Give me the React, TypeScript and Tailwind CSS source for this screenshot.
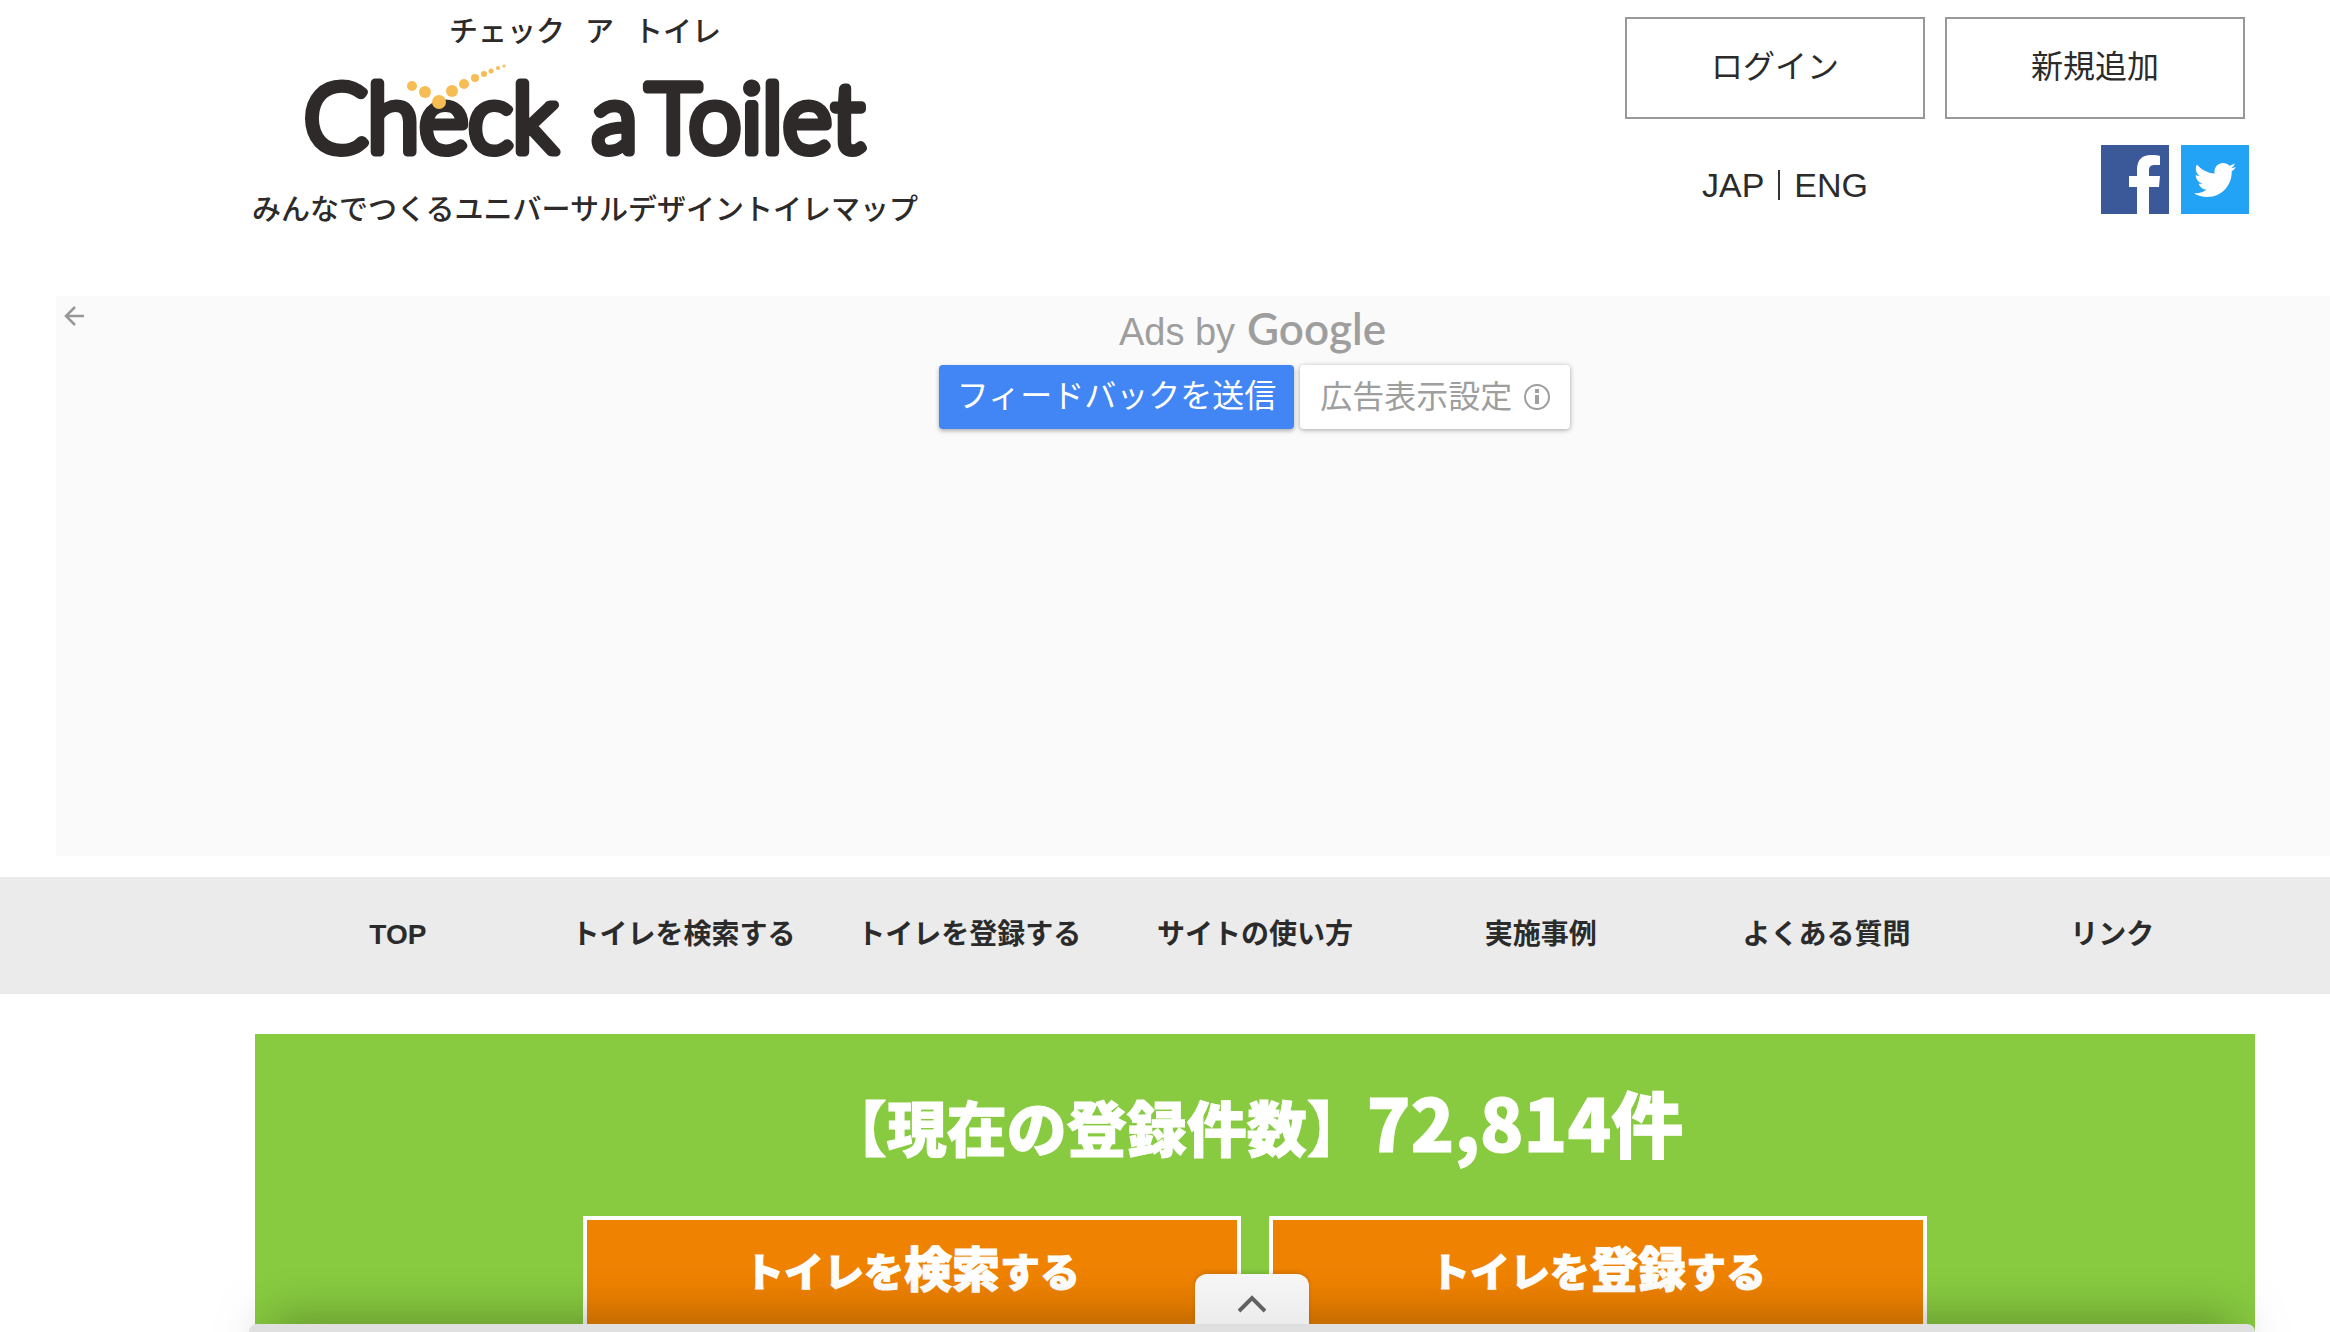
import { FaTwitter } from "react-icons/fa";

const NAV_ITEMS = [
  "TOP",
  "トイレを検索する",
  "トイレを登録する",
  "サイトの使い方",
  "実施事例",
  "よくある質問",
  "リンク",
];

const CHECK_DOTS = [
  [117, 37, 5],
  [130, 43, 6],
  [144, 53, 7],
  [157, 42, 6],
  [169, 35, 5],
  [180, 29, 4],
  [189, 25, 3],
  [196, 22, 2.5],
  [203, 19, 2],
  [209, 17, 1.5],
];

function Logo() {
  return (
    <a href="#" className="flex w-[668px] flex-col items-center text-[29px] leading-10 font-medium text-[#2d2a29]">
      <span className="flex gap-5">
        <span>チェック</span>
        <span>ア</span>
        <span>トイレ</span>
      </span>
      <svg viewBox="0 0 580 138" className="h-[138px] w-[580px]" role="img" aria-label="Check a Toilet">
        <g
          fill="#2d2a29"
          stroke="#2d2a29"
          strokeWidth="9"
          strokeLinejoin="round"
          fontFamily="Lato, sans-serif"
          fontWeight="300"
          fontSize="94"
        >
          <text x="9" y="103">Check</text>
          <text x="297" y="103">a</text>
          <text x="351" y="103">Toilet</text>
        </g>
        <g fill="#f6bd55">
          {CHECK_DOTS.map(([x, y, r]) => (
            <circle key={x} cx={x} cy={y} r={r} />
          ))}
        </g>
      </svg>
      <span className="whitespace-nowrap">みんなでつくるユニバーサルデザイントイレマップ</span>
    </a>
  );
}

function FacebookMark() {
  return (
    <svg viewBox="0 0 68 69" className="h-[69px] w-[68px]" aria-hidden="true">
      <rect width="68" height="69" fill="#3b5998" />
      <path
        fill="#fff"
        d="M36 69V42h-8V31h8v-6c0-10 5-15 14-15 4 0 7 0 9 1v9h-5c-5 0-6 2-6 6v5h11l-1 11H48v27z"
      />
    </svg>
  );
}

function Header() {
  return (
    <header className="flex h-[296px] items-start justify-between pr-[81px] pl-[251px]">
      <div className="pt-[9px]">
        <Logo />
      </div>
      <div className="flex flex-col gap-[26px] pt-[17px]">
        <div className="flex gap-5 pr-1">
          {["ログイン", "新規追加"].map((label) => (
            <button
              key={label}
              type="button"
              className="h-[102px] w-[300px] border-2 border-[#999] pb-2 text-[32px] leading-10"
            >
              {label}
            </button>
          ))}
        </div>
        <div className="flex items-start justify-between pl-[77px]">
          <div className="flex items-center gap-3.5 pt-5 font-['Liberation_Sans',sans-serif] text-[34px] leading-10">
            <a href="#">JAP</a>
            <span className="h-[30px] w-0.5 bg-[#333]" />
            <a href="#">ENG</a>
          </div>
          <div className="flex gap-3">
            <a href="#" aria-label="Facebook">
              <FacebookMark />
            </a>
            <a
              href="#"
              aria-label="Twitter"
              className="flex h-[69px] w-[68px] items-center justify-center bg-[#22a3f5] text-white"
            >
              <FaTwitter size={42} />
            </a>
          </div>
        </div>
      </div>
    </header>
  );
}

function AdPanel() {
  return (
    <section className="relative ml-14 flex h-[560px] flex-col items-center bg-[#fafafa] pt-[7px] pl-[123px] text-[#9e9e9e]">
      <button type="button" aria-label="戻る" className="absolute top-2.5 left-2">
        <svg viewBox="0 0 20 20" className="size-5" fill="none" stroke="#979797" strokeWidth="2.5">
          <path d="M20 10H2M11 1 2 10l9 9" />
        </svg>
      </button>
      <p className="flex items-baseline gap-3 pr-1 leading-[50px]">
        <span className="font-['Liberation_Sans',sans-serif] text-[38px]">Ads by</span>
        <span className="font-['Lato',sans-serif] text-[44px] font-semibold">Google</span>
      </p>
      <div className="mt-2 flex gap-1.5 text-[32px] leading-10">
        <button
          type="button"
          className="h-16 rounded-sm bg-[#4285f4] px-[18px] pb-2 text-white shadow-[0_2px_4px_rgba(0,0,0,0.3)]"
        >
          フィードバックを送信
        </button>
        <button
          type="button"
          className="flex h-16 items-center gap-3 rounded-sm bg-white px-5 pb-1.5 shadow-[0_1px_5px_rgba(0,0,0,0.35)]"
        >
          広告表示設定
          <svg viewBox="0 0 26 26" className="mt-1.5 size-[26px]" fill="none" stroke="#9e9e9e" strokeWidth="2">
            <circle cx="13" cy="13" r="12" />
            <path strokeWidth="4" d="M13 11v9M13 5v4" />
          </svg>
        </button>
      </div>
    </section>
  );
}

function Nav() {
  return (
    <nav className="mt-[21px] bg-[#ebebeb] pr-[75px] pb-0.5 pl-[255px]">
      <ul className="grid grid-cols-7 text-center font-['Liberation_Sans','Noto_Sans_CJK_JP',sans-serif] text-[28px] leading-[115px] font-bold whitespace-nowrap">
        {NAV_ITEMS.map((item) => (
          <li key={item}>
            <a href="#" className="block">
              {item}
            </a>
          </li>
        ))}
      </ul>
    </nav>
  );
}

function Hero() {
  return (
    <main className="mt-10 mr-[75px] ml-[255px] bg-[#88cb40] pt-[35px] pb-16 font-black text-white [-webkit-text-stroke:1px_white]">
      <h1 className="text-center text-[60px] leading-[104px]">
        【現在の登録件数】<span className="text-[72px]">72,814件</span>
      </h1>
      <div className="mt-[38px] flex justify-center gap-7 text-[40px] leading-[60px]">
        {["検索", "登録"].map((action) => (
          <a
            key={action}
            href="#"
            className="h-[140px] w-[658px] border-4 border-white bg-[#ef8200] pt-4 text-center"
          >
            トイレを<span className="text-[48px]">{action}</span>する
          </a>
        ))}
      </div>
    </main>
  );
}

function BottomSheet() {
  return (
    <div className="absolute right-[75px] -bottom-[52px] left-[249px] flex h-[60px] items-start justify-center rounded-t-lg bg-[#e0e0e0] shadow-[0_-16px_50px_-20px_rgba(0,0,0,0.6)]">
      <button
        type="button"
        aria-label="広告を開く"
        className="-mt-[50px] flex h-[50px] w-[114px] items-center justify-center rounded-t-xl bg-gradient-to-b from-[#f6f6f6] to-[#ececec] pt-2.5 shadow-[0_-2px_4px_rgba(0,0,0,0.12)]"
      >
        <svg viewBox="0 0 28 18" className="h-[18px] w-7" fill="none" stroke="#616161" strokeWidth="4">
          <path d="M1 16 14 3l13 13" />
        </svg>
      </button>
    </div>
  );
}

export default function App() {
  return (
    <div className="relative h-screen overflow-hidden bg-white font-['Noto_Sans_CJK_JP',sans-serif] text-[#2b2b2b]">
      <Header />
      <AdPanel />
      <Nav />
      <Hero />
      <BottomSheet />
    </div>
  );
}
